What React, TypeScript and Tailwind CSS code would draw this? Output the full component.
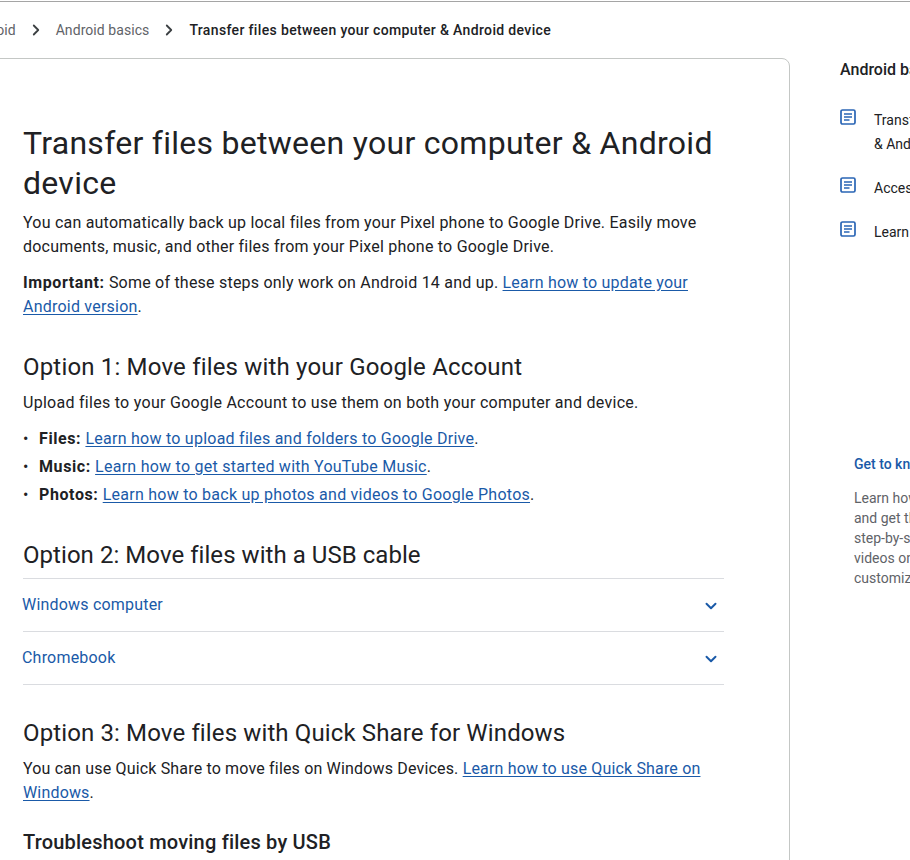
import React from "react";
import { ChevronDown, ChevronRight } from "lucide-react";

const font = { fontFamily: "Roboto, sans-serif" };

function Link({ children }: { children: React.ReactNode }) {
  return <a className="text-[#1a5aa8] underline underline-offset-2">{children}</a>;
}

function Strong({ children }: { children: React.ReactNode }) {
  return <b className="font-bold tracking-[0.6px]">{children}</b>;
}

function DocIcon() {
  return (
    <svg width="18" height="18" viewBox="0 0 18 18" fill="none" className="-ml-px mr-px shrink-0 text-[#2a65b5]">
      <rect x="2" y="2" width="14" height="14" rx="1.5" stroke="currentColor" strokeWidth="1.7" />
      <path d="M5 6h8M5 9h8M5 12h5.5" stroke="currentColor" strokeWidth="1.4" />
    </svg>
  );
}

function Accordion({ label }: { label: string }) {
  return (
    <div className="flex h-[53px] items-center justify-between border-b border-[#dadce0] pr-[4px]">
      <span className="-ml-px text-[16px] tracking-[0.2px] text-[#1a5aa8]">{label}</span>
      <ChevronDown size={18} strokeWidth={2.6} className="mt-[2px] text-[#1a5aa8]" />
    </div>
  );
}

export default function App() {
  return (
    <div className="h-[860px] w-[910px] overflow-hidden bg-white text-[#202124]" style={font}>
      <div className="mt-px h-[1px] bg-[#a5a5a5]" />
      <div className="-ml-[33px] flex h-[56px] items-center text-[14px]">
        <span className="text-[#5f6368]">Android</span>
        <ChevronRight size={18} strokeWidth={2.4} className="mx-[11px] text-[#3c4043]" />
        <span className="tracking-[0.07px] text-[#5f6368]">Android basics</span>
        <ChevronRight size={18} strokeWidth={2.4} className="mx-[11px] text-[#3c4043]" />
        <span className="font-medium tracking-[0.35px]">Transfer files between your computer &amp; Android device</span>
      </div>
      <div className="flex items-start">
        <main className="-ml-px h-[900px] w-[791px] shrink-0 rounded-tr-[8px] border border-[#c4c7c5] pt-[64px] pl-[23px] pr-[65px]">
          <h1 className="text-[32px] leading-[40px] tracking-[0.28px]">Transfer files between your computer &amp; Android device</h1>
          <p className="mt-[8px] text-[16px] leading-[24px] tracking-[0.22px]">
            You can automatically back up local files from your Pixel phone to Google Drive. Easily move documents, music, and other files from your Pixel phone to Google Drive.
          </p>
          <p className="mt-[12px] text-[16px] leading-[24px] tracking-[0.22px]">
            <Strong>Important:</Strong> Some of these steps only work on Android 14 and up. <Link>Learn how to update your Android version</Link>.
          </p>
          <h2 className="mt-[32px] text-[24px] leading-[32px] tracking-[0.18px]">Option 1: Move files with your Google Account</h2>
          <p className="mt-[8px] text-[16px] leading-[24px] tracking-[0.28px]">Upload files to your Google Account to use them on both your computer and device.</p>
          <ul className="mt-[12px] flex flex-col gap-[4px] text-[16px] leading-[24px] tracking-[0.25px]">
            <li className="flex"><span className="w-[16px]">•</span><span><Strong>Files:</Strong> <Link>Learn how to upload files and folders to Google Drive</Link>.</span></li>
            <li className="flex"><span className="w-[16px]">•</span><span><Strong>Music:</Strong> <Link>Learn how to get started with YouTube Music</Link>.</span></li>
            <li className="flex"><span className="w-[16px]">•</span><span><Strong>Photos:</Strong> <Link>Learn how to back up photos and videos to Google Photos</Link>.</span></li>
          </ul>
          <h2 className="mt-[32px] text-[24px] leading-[32px] tracking-[0.05px]">Option 2: Move files with a USB cable</h2>
          <div className="mt-[7px] border-t border-[#dadce0]">
            <Accordion label="Windows computer" />
            <Accordion label="Chromebook" />
          </div>
          <h2 className="mt-[32px] text-[24px] leading-[32px] tracking-[0.13px]">Option 3: Move files with Quick Share for Windows</h2>
          <p className="mt-[8px] text-[16px] leading-[24px] tracking-[0.17px]">
            You can use Quick Share to move files on Windows Devices. <Link>Learn how to use Quick Share on Windows</Link>.
          </p>
          <h3 className="mt-[23px] text-[20px] leading-[28px] font-medium tracking-[0.2px]">Troubleshoot moving files by USB</h3>
        </main>
        <aside className="ml-[50px] w-[240px] shrink-0 pt-px">
          <div className="whitespace-nowrap text-[16px] font-medium leading-[22px]">Android basics</div>
          <div className="mt-[27px] flex flex-col gap-[20px] text-[14px] leading-[24px]">
            <div className="flex gap-[16px]"><DocIcon /><span className="whitespace-nowrap">Transfer files between your computer<br />&amp; Android device</span></div>
            <div className="flex gap-[16px]"><DocIcon /><span className="whitespace-nowrap">Access files on your device</span></div>
            <div className="flex gap-[16px]"><DocIcon /><span className="whitespace-nowrap">Learn about your device</span></div>
          </div>
          <div className="mt-[210px] pl-[14px]">
            <div className="whitespace-nowrap text-[14px] font-medium text-[#1a5aa8]">Get to know your device</div>
            <p className="mt-[13px] whitespace-nowrap text-[14px] leading-[20px] text-[#5f6368]">
              Learn how to set up your phone<br />and get the most out of it with<br />step-by-step guides, tips and<br />videos on how to use and<br />customize your device.
            </p>
          </div>
        </aside>
      </div>
    </div>
  );
}
